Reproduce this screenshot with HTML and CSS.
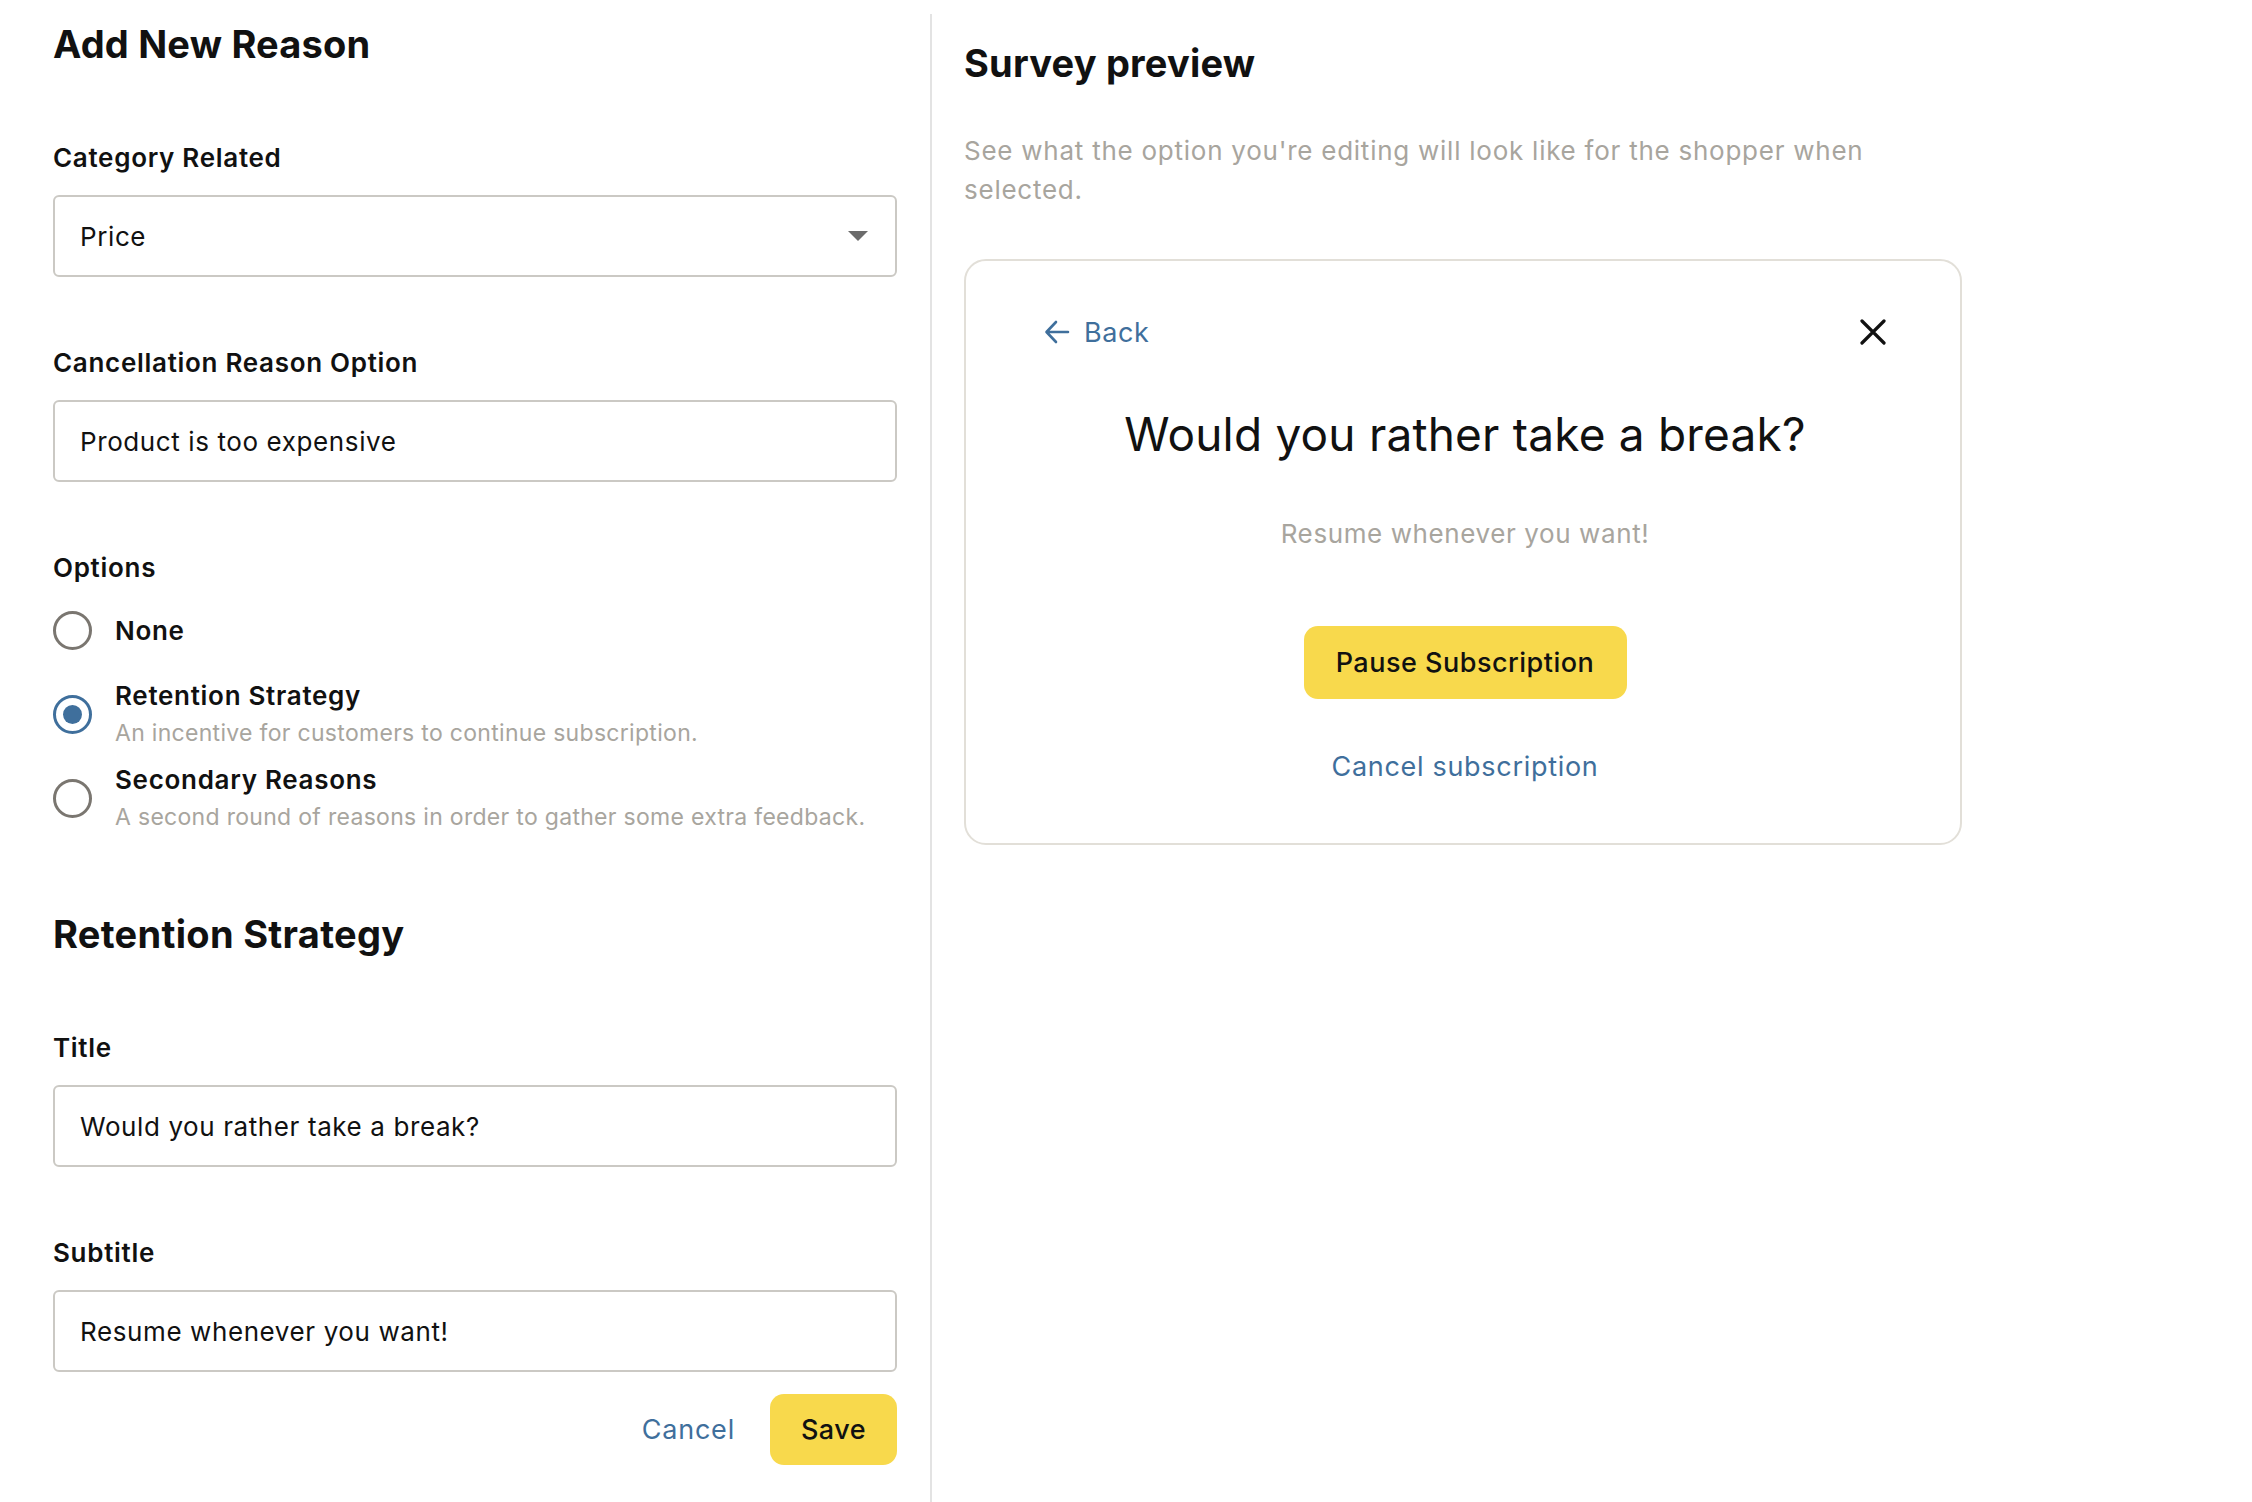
FILE: index.html
```html
<!DOCTYPE html>
<html lang="en">
<head>
    <meta charset="UTF-8">
    <meta name="viewport" content="width=device-width, initial-scale=1.0">
    <title>Add New Reason</title>
    <link rel="stylesheet" href="styles.css">
</head>
<body>
    <div class="layout">
        <form class="editor">
            <h1 class="heading">Add New Reason</h1>

            <label class="field-label" for="category">Category Related</label>
            <div class="select">
                <span>Price</span>
                <span class="select-caret"></span>
            </div>

            <label class="field-label" for="reason">Cancellation Reason Option</label>
            <div class="input" id="reason">Product is too expensive</div>

            <div class="field-label">Options</div>
            <div class="options">
                <div class="option option-none">
                    <span class="radio"></span>
                    <div class="option-body">
                        <div class="option-title">None</div>
                    </div>
                </div>
                <div class="option">
                    <span class="radio checked"></span>
                    <div class="option-body">
                        <div class="option-title">Retention Strategy</div>
                        <div class="option-desc">An incentive for customers to continue subscription.</div>
                    </div>
                </div>
                <div class="option">
                    <span class="radio"></span>
                    <div class="option-body">
                        <div class="option-title">Secondary Reasons</div>
                        <div class="option-desc">A second round of reasons in order to gather some extra feedback.</div>
                    </div>
                </div>
            </div>

            <h2 class="heading section-heading">Retention Strategy</h2>

            <label class="field-label">Title</label>
            <div class="input">Would you rather take a break?</div>

            <label class="field-label">Subtitle</label>
            <div class="input">Resume whenever you want!</div>

            <div class="actions">
                <button type="button" class="link-button">Cancel</button>
                <button type="button" class="primary-button save-button">Save</button>
            </div>
        </form>

        <section class="preview">
            <h2 class="heading">Survey preview</h2>
            <p class="preview-intro">See what the option you're editing will look like for the shopper when selected.</p>

            <div class="survey-card">
                <div class="survey-top">
                    <a class="back-link">
                        <svg width="26" height="26" viewBox="0 0 26 26" fill="none" stroke="currentColor" stroke-width="2.6" stroke-linecap="round" stroke-linejoin="round">
                            <path d="M24 13H3M12 3L2.5 13L12 23"/>
                        </svg>
                        Back
                    </a>
                    <svg class="close-icon" width="26" height="26" viewBox="0 0 26 26" stroke="#111" stroke-width="3.2" stroke-linecap="round">
                        <path d="M2 2L24 24M24 2L2 24"/>
                    </svg>
                </div>
                <div class="survey-title">Would you rather take a break?</div>
                <div class="survey-subtitle">Resume whenever you want!</div>
                <button type="button" class="primary-button pause-button">Pause Subscription</button>
                <a class="survey-cancel">Cancel subscription</a>
            </div>
        </section>
    </div>
</body>
</html>
```

FILE: styles.css
```css
body {
    margin: 0;
    background-color: #ffffff;
    font-family: 'Inter', 'Noto Sans', sans-serif;
    color: #111111;
}

.layout {
    display: flex;
    margin-top: 14px;
    min-height: calc(100vh - 14px);
}

.editor {
    width: 844px;
    padding: 0 33px 0 53px;
    display: flex;
    flex-direction: column;
}

.heading {
    margin: 0;
    font-size: 38px;
    line-height: 44px;
    font-weight: 700;
    letter-spacing: 0.2px;
}

.editor > .heading:first-child {
    margin-top: 8px;
}

.field-label {
    display: block;
    font-size: 26px;
    line-height: 34px;
    font-weight: 600;
    letter-spacing: 0.7px;
    margin-top: 69px;
    margin-bottom: 20px;
}

.editor > .heading:first-child + .field-label {
    margin-top: 75px;
}

.select,
.input {
    box-sizing: border-box;
    height: 82px;
    border: 2px solid #cbc9c4;
    border-radius: 6px;
    padding: 0 25px;
    display: flex;
    align-items: center;
    font-size: 26px;
    letter-spacing: 0.6px;
}

.select {
    justify-content: space-between;
    padding-right: 27px;
}

.select-caret {
    width: 0;
    height: 0;
    border-left: 10px solid transparent;
    border-right: 10px solid transparent;
    border-top: 10px solid #6b6b6b;
}

.options {
    display: flex;
    flex-direction: column;
    margin-top: 6px;
}

.option {
    display: flex;
    align-items: center;
    gap: 23px;
    margin-bottom: 13px;
}

.option-none {
    margin-bottom: 29px;
}

.radio {
    box-sizing: border-box;
    width: 39px;
    height: 39px;
    flex-shrink: 0;
    border: 3px solid #7a7670;
    border-radius: 50%;
    display: flex;
    align-items: center;
    justify-content: center;
}

.radio.checked {
    border-color: #3f6f9c;
}

.radio.checked::after {
    content: '';
    width: 19px;
    height: 19px;
    border-radius: 50%;
    background-color: #3f6f9c;
}

.option-title {
    font-size: 26px;
    line-height: 34px;
    font-weight: 600;
    letter-spacing: 0.7px;
}

.option-desc {
    margin-top: 3px;
    font-size: 23px;
    line-height: 34px;
    letter-spacing: 0.3px;
    color: #a8a59e;
}

.section-heading {
    margin-top: 65px;
    letter-spacing: 0.3px;
}

.section-heading + .field-label {
    margin-top: 75px;
}

.actions {
    display: flex;
    justify-content: flex-end;
    align-items: center;
    gap: 35px;
    margin-top: 22px;
}

.link-button {
    background: none;
    border: none;
    padding: 0;
    font-family: inherit;
    font-size: 27px;
    letter-spacing: 0.8px;
    color: #3f6f9c;
    cursor: pointer;
}

.primary-button {
    background-color: #f8d94c;
    border: none;
    border-radius: 14px;
    font-family: inherit;
    font-size: 27px;
    font-weight: 500;
    letter-spacing: 0.5px;
    color: #111111;
    cursor: pointer;
}

.save-button {
    width: 127px;
    height: 71px;
}

.preview {
    flex: 1;
    border-left: 2px solid #e3e3e3;
    padding: 27px 0 0 32px;
}

.preview-intro {
    width: 930px;
    margin: 46px 0 0;
    font-size: 26px;
    line-height: 39px;
    letter-spacing: 0.75px;
    color: #a8a59e;
}

.survey-card {
    box-sizing: border-box;
    width: 998px;
    height: 586px;
    margin-top: 50px;
    border: 2px solid #e2dfd8;
    border-radius: 22px;
    padding: 56px 74px 0 78px;
    display: flex;
    flex-direction: column;
    align-items: center;
}

.survey-top {
    align-self: stretch;
    display: flex;
    justify-content: space-between;
    align-items: center;
    height: 30px;
}

.back-link {
    display: flex;
    align-items: center;
    gap: 14px;
    font-size: 27px;
    letter-spacing: 0.6px;
    color: #3f6f9c;
}

.survey-title {
    margin-top: 60px;
    font-size: 46px;
    line-height: 54px;
    font-weight: 400;
    letter-spacing: 0.2px;
}

.survey-subtitle {
    margin-top: 55px;
    font-size: 26px;
    line-height: 36px;
    letter-spacing: 0.6px;
    color: #a8a59e;
}

.pause-button {
    margin-top: 74px;
    width: 323px;
    height: 73px;
}

.survey-cancel {
    margin-top: 50px;
    font-size: 27px;
    line-height: 36px;
    color: #3f6f9c;
    letter-spacing: 0.7px;
}
```
